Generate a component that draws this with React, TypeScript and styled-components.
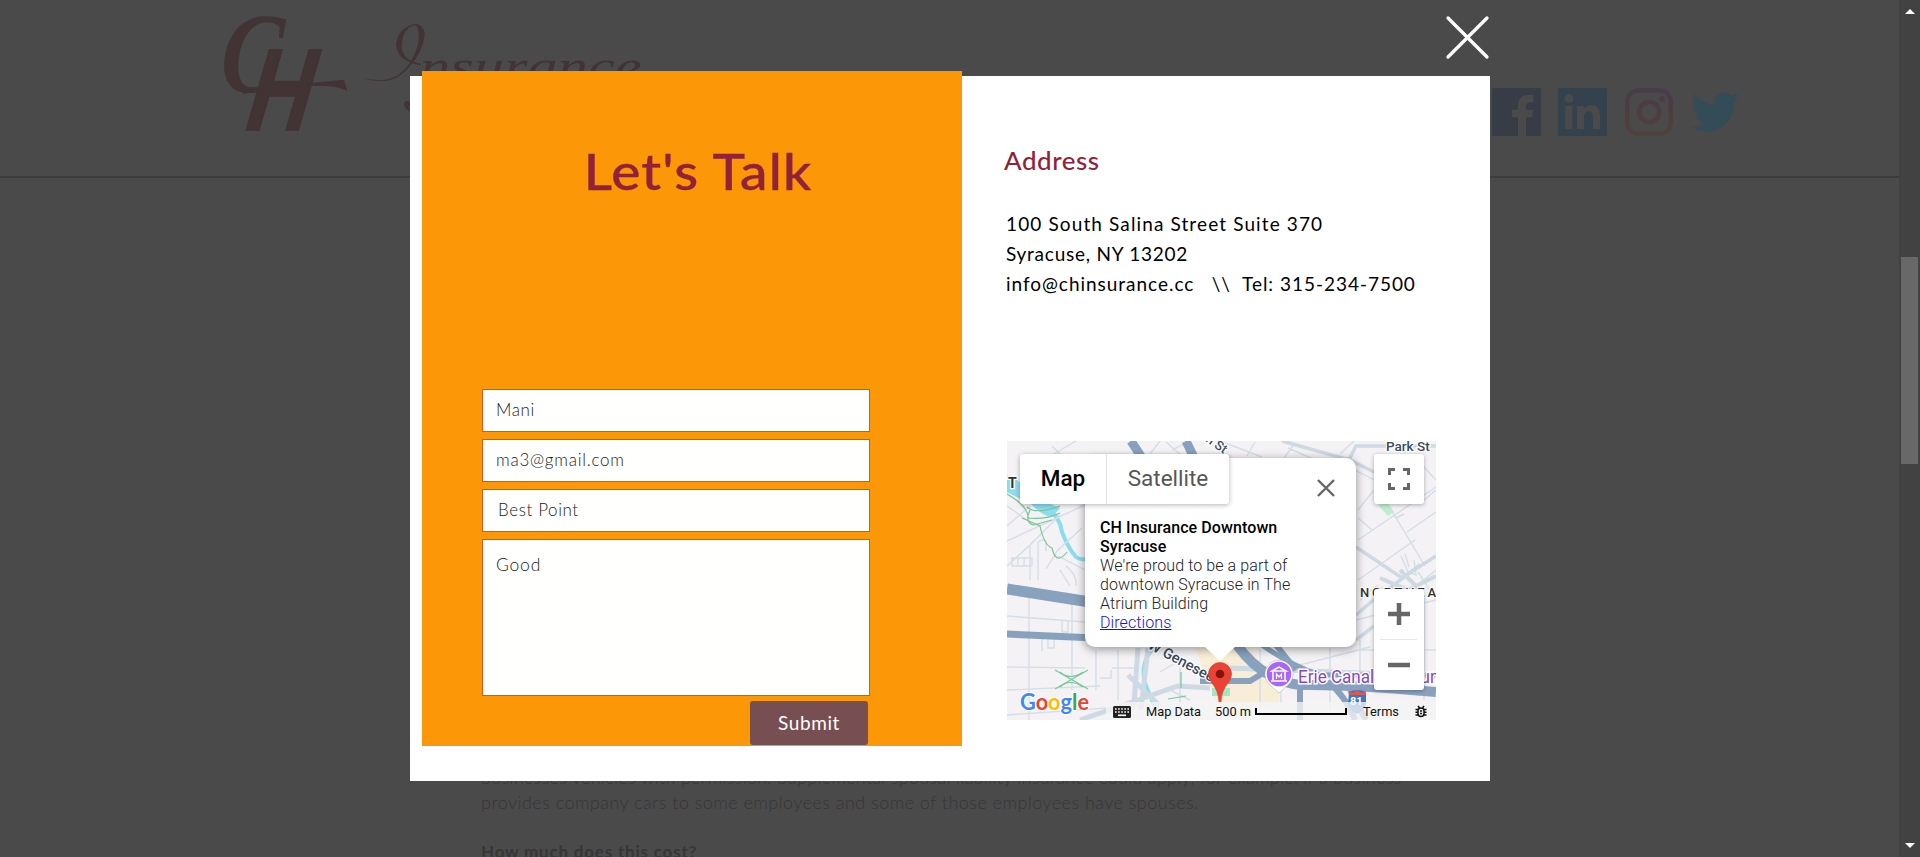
import React from "react";
import styled, { createGlobalStyle } from "styled-components";
import { FaTwitter } from "react-icons/fa";

const GlobalStyle = createGlobalStyle`
  * { box-sizing: border-box; }
  html, body { margin: 0; padding: 0; overflow: hidden; background: #4a4a4a; }
  body { font-family: Lato, "Open Sans", sans-serif; }
`;

const Page = styled.div`
  position: relative;
  display: flex;
  width: 1920px;
  height: 857px;
  overflow: hidden;
  background: #4a4a4a;
`;

const Site = styled.div`
  display: flex;
  flex-direction: column;
  justify-content: space-between;
  width: 1899px;
  height: 857px;
  overflow: hidden;
`;

const Header = styled.header`
  display: flex;
  justify-content: space-between;
  height: 178px;
  padding: 0 160px 0 200px;
  border-bottom: 2px solid #3c3c3c;
`;

const Social = styled.nav`
  display: flex;
  align-items: flex-start;
  gap: 17px;
  padding-top: 88px;
  svg { display: block; }
`;

const Article = styled.main`
  height: 92px;
  padding-left: 481px;
  color: #363636;
  font-weight: 300;
  font-size: 18px;
  line-height: 25px;
  white-space: nowrap;
`;

const Line = styled.p<{ $spacing: number }>`
  margin: 0;
  letter-spacing: ${(p) => p.$spacing}px;
`;

const Question = styled.h3`
  margin: 24px 0 0;
  font-size: 17px;
  line-height: 25px;
  font-weight: 700;
  letter-spacing: 0.8px;
`;

const Scrollbar = styled.div`
  display: flex;
  flex-direction: column;
  align-items: center;
  justify-content: space-between;
  width: 21px;
  padding: 9px 0;
  background: #424242;
`;

const Arrow = styled.span<{ $down?: boolean }>`
  border-left: 5px solid transparent;
  border-right: 5px solid transparent;
  ${(p) => (p.$down ? "border-top" : "border-bottom")}: 5px solid #fff;
`;

const Thumb = styled.span`
  width: 17px;
  height: 207px;
  margin-bottom: 136px;
  background: #686868;
`;

const Modal = styled.section`
  position: absolute;
  left: 410px;
  top: 76px;
  display: flex;
  width: 1080px;
  height: 705px;
  background: #fff;
`;

const CloseModal = styled.button`
  position: absolute;
  right: 0;
  top: -61px;
  width: 45px;
  height: 45px;
  padding: 0;
  border: 0;
  background: none;
  svg { display: block; }
`;

const TalkPanel = styled.div`
  display: flex;
  flex-direction: column;
  width: 540px;
  height: 675px;
  margin: -5px 0 0 12px;
  background: #fc9807;
`;

const Title = styled.h1`
  margin: 70px 0 0;
  padding-left: 11px;
  height: 248px;
  color: #91223a;
  font-size: 50px;
  line-height: 60px;
  font-weight: 500;
  letter-spacing: 1px;
  text-align: center;
  transform: scaleX(1.1);
  -webkit-text-stroke: 0.4px #91223a;
`;

const Form = styled.form`
  display: flex;
  flex-direction: column;
  gap: 7px;
  width: 388px;
  margin-left: 60px;
`;

const Field = styled.input<{ $indent?: number; $spacing?: number }>`
  height: 43px;
  padding: 0 13px 2px ${(p) => p.$indent ?? 13}px;
  border: 1px solid #d35a1c;
  border-radius: 0;
  outline: 0;
  background: #fffffe;
  color: #222;
  font: 300 17px/22px Lato, sans-serif;
  letter-spacing: ${(p) => p.$spacing ?? 0.6}px;
`;

const Message = styled.textarea`
  height: 157px;
  padding: 14px 13px;
  border: 1px solid #d35a1c;
  border-radius: 0;
  outline: 0;
  resize: none;
  background: #fffffe;
  color: #222;
  font: 300 17.5px/22px Lato, sans-serif;
  letter-spacing: 0.8px;
`;

const Submit = styled.button`
  align-self: flex-end;
  width: 118px;
  height: 44px;
  margin: -2px 2px 0 0;
  padding: 0;
  border: 0;
  border-radius: 3px;
  background: #774e52;
  color: #fff;
  font: 400 19px/24px Lato, sans-serif;
  letter-spacing: 0.6px;
`;

const Contact = styled.div`
  display: flex;
  flex-direction: column;
  padding: 69px 0 0 45px;
`;

const ContactTitle = styled.h2`
  margin: 0 0 32px -3px;
  color: #91223a;
  font-size: 24px;
  line-height: 32px;
  font-weight: 500;
  letter-spacing: 0.5px;
  transform: scaleX(1.08);
  transform-origin: left;
`;

const Address = styled.address`
  height: 156px;
  color: #000;
  font-size: 19px;
  line-height: 30px;
  font-style: normal;
  white-space: pre;
  p { margin-left: -1px; }
`;

const MapBox = styled.div`
  position: relative;
  width: 429px;
  height: 279px;
  margin-top: 76px;
  overflow: hidden;
  background: #f4f2f4;
  font-family: Roboto, sans-serif;
  & > svg { display: block; }
`;

const MapTypes = styled.div`
  position: absolute;
  left: 13px;
  top: 13px;
  display: flex;
  height: 50px;
  border-radius: 3px;
  background: #fff;
  box-shadow: 0 1px 5px rgba(0, 0, 0, 0.3);
`;

const MapType = styled.button<{ $active?: boolean }>`
  width: ${(p) => (p.$active ? 86 : 123)}px;
  padding: 0 0 2px;
  border: 0;
  border-left: ${(p) => (p.$active ? "0" : "1px solid #e2e2e2")};
  background: none;
  color: ${(p) => (p.$active ? "#000" : "#565656")};
  font: ${(p) => (p.$active ? 500 : 400)} 22.5px Roboto, sans-serif;
`;

const Control = styled.div<{ $top: number; $height: number }>`
  position: absolute;
  right: 12px;
  top: ${(p) => p.$top}px;
  width: 50px;
  height: ${(p) => p.$height}px;
  border-radius: 3px;
  background: #fff;
  box-shadow: 0 1px 4px rgba(0, 0, 0, 0.3);
  svg { display: block; }
`;

const InfoWindow = styled.div`
  position: absolute;
  left: 78px;
  top: 17px;
  width: 271px;
  height: 189px;
  padding: 60px 15px 0;
  border-radius: 10px;
  background: #fff;
  box-shadow: 0 2px 8px 1px rgba(0, 0, 0, 0.35);
  color: #222;
  font-size: 16px;
  line-height: 19.1px;
  font-weight: 300;
  letter-spacing: 0.09px;
  white-space: nowrap;
  &::after {
    content: "";
    position: absolute;
    left: 119px;
    top: 188px;
    border: 16px solid transparent;
    border-top: 15px solid #fff;
    border-bottom: 0;
  }
  strong { color: #000; font-weight: 500; }
  a { color: #1a0dee; text-decoration: underline; }
`;

const CloseInfo = styled.svg`
  position: absolute;
  right: 21px;
  top: 21px;
`;

const Legal = styled.div`
  position: absolute;
  right: 0;
  bottom: -1px;
  display: flex;
  align-items: center;
  width: 330px;
  height: 19px;
  padding: 0 9px 0 7px;
  background: rgba(245, 245, 245, 0.78);
  color: #111;
  font-size: 12.8px;
  line-height: 18px;
  white-space: nowrap;
`;

const LegalText = styled.span<{ $left: number; $width: number }>`
  width: ${(p) => p.$width}px;
  margin-left: ${(p) => p.$left}px;
`;

const ScaleBar = styled.span`
  width: 92px;
  height: 7px;
  margin-left: 5px;
  border: 2px solid #000;
  border-top: 0;
`;

const maroon = "#423335";

function Logo() {
  return (
    <svg width="460" height="176" viewBox="0 0 1380 528" fill={maroon}>
      <text transform="translate(57 276) skewX(-4) scale(0.79 0.98)" fontFamily="Liberation Serif" fontWeight="700" fontStyle="italic" fontSize="350">C</text>
      <text transform="translate(134 390) skewX(-8) scale(0.76 1)" fontFamily="Liberation Sans" fontWeight="700" fontStyle="italic" fontSize="349" stroke={maroon} strokeWidth="6">H</text>
      <path d="M130 270 L190 264 L300 252 L432 239 L442 272 Q405 255 330 258 L190 273 L130 281 Z" />
      <path d="M488 233 Q520 243 555 239 Q600 233 630 188 Q662 135 656 98 Q654 74 642 76 Q606 88 605 140 Q608 182 662 191 L660 195 Q592 184 588 135 Q592 84 645 71 Q674 74 674 106 Q668 160 625 204 Q588 244 550 243 Q510 243 488 233Z" />
      <text x="660" y="246" fontFamily="Liberation Serif" fontStyle="italic" fontSize="140" textLength="665" lengthAdjust="spacingAndGlyphs">nsurance</text>
      <path d="M630 305 Q612 298 612 315 Q616 328 630 335 L630 325 Q618 320 630 318Z" />
    </svg>
  );
}

function MapDrawing() {
  return (
    <svg width="429" height="279" viewBox="1007 441 429 279" fill="none">
      <path d="M1195 648 H1250 L1280 690 L1278 706 L1218 706 Z" fill="#f8eed8" />
      <path d="M1378 505 L1388 503 L1394 512 L1388 516 Z" fill="#bdeed0" />
      <path d="M1212 688 H1230 V696 H1212 Z" fill="#a6e5c0" />
      <path d="M1007 475 Q1022 480 1030 495 L1060 508 L1052 517 Q1042 516 1030 503 Q1018 498 1007 492Z" fill="#8bdcee" />
      <path d="M1046 508 Q1060 516 1062 532 Q1068 548 1076 557 Q1080 560 1085 559" stroke="#8bdcee" strokeWidth="4" />
      <path d="M1158 645 Q1140 658 1144 680 L1154 706" stroke="#8bdcee" strokeWidth="3.500" />
      <g stroke="#d3dee7" strokeWidth="1.4">
        <path d="M1007 541 L1085 505 M1007 526 L1030 506 M1007 566 L1030 545 L1060 515 M1030 545 V580 M1038 580 V543 Q1041 538 1046 541 V551 M1046 569 L1058 550 L1082 528 M1058 556 L1085 570 M1012 558 H1032 V566 H1012Z M1018 558 V566 M1024 558 V566 M1060 570 L1070 586 M1066 566 Q1077 574 1076 586 M1007 506 L1027 520" />
        <path d="M1029 597 V720 M1072 600 V690 M1007 616 L1085 622 M1007 667 L1085 668 M1007 690 L1100 686 M1042 636 V651 M1048 636 V648 H1054 V637 M1062 620 V632 H1068 V620 M1096 650 V690 M1112 668 H1135 M1111 670 V678 H1100 M1007 715 L1150 705 M1118 650 V700 M1160 672 L1180 660 M1170 690 L1190 700 M1180 660 V706" />
        <path d="M1052 455 L1076 441 M1066 460 L1052 446 M1150 454 L1160 441 M1166 442 L1182 456 M1172 450 L1190 441 M1220 441 L1262 457 M1255 442 L1247 456 M1295 443 L1284 458 M1288 448 L1320 462 M1340 454 L1354 441 M1355 470 L1378 482 M1358 510 L1374 490 M1358 540 L1436 487 M1390 508 L1425 566 M1407 532 L1436 512 M1396 518 L1404 514 M1358 580 L1415 540 M1412 454 L1436 480 M1424 500 L1436 490 M1401 556 L1408 572 L1416 575 L1414 560 M1405 554 L1409 567 M1358 518 L1372 530 M1356 620 L1436 600 M1356 650 H1436 M1360 640 V710 M1374 620 L1436 570 M1424 590 V700 M1260 650 V710 M1281 648 V706 M1330 648 V710 M1300 665 L1370 647 M1418 572 L1436 600 M1360 600 L1378 585" />
      </g>
      <g stroke="#cdd9e3" strokeWidth="3.500">
        <path d="M1282 441 L1349 460 L1356 446 H1436 M1346 458 L1374 472 M1356 547 L1402 578 L1436 556 M1374 600 L1420 565 M1356 615 L1385 590 M1356 640 L1374 626" />
        <path d="M1138 648 L1134 705 M1148 648 L1141 710 M1080 720 L1178 686 L1210 688 M1128 675 L1160 706 M1230 668 L1436 676" strokeWidth="5" />
        <path d="M1380 578 L1408 590 L1436 576 M1400 570 L1420 590" strokeWidth="4" />
      </g>
      <g stroke="#88a1be">
        <path d="M1131 441 L1150 470 M1186 441 L1200 470" strokeWidth="9" />
        <path d="M1007 589 L1090 602" strokeWidth="11" />
        <path d="M1007 634 L1095 638" strokeWidth="7" />
        <path d="M1237 645 Q1262 680 1300 685 Q1350 684 1436 692" strokeWidth="10" />
        <path d="M1262 645 Q1290 665 1320 675 H1436" strokeWidth="5" />
        <path d="M1200 681 H1250 L1268 670 M1276 645 L1296 670 M1300 686 V720 M1350 690 L1366 720" strokeWidth="6" />
        <path d="M1328 682 Q1345 695 1355 720" strokeWidth="6" />
      </g>
      <g stroke="#78c69a" strokeWidth="1.2">
        <path d="M1007 494 Q1030 507 1028 520 M1027 507 Q1035 515 1060 506 M1027 518 Q1046 520 1060 513 M1022 518 L1040 526 Q1044 545 1052 548 Q1056 566 1067 552 M1030 510 Q1024 523 1034 525 L1052 520 M1055 670 L1088 689 M1055 689 L1088 670 M1181 672 V688 M1168 699 L1186 696" />
        <path d="M1060 672 Q1070 681 1083 672 M1060 687 Q1070 678 1083 687" />
      </g>
      <g fontFamily="Roboto, sans-serif" stroke="#fff" strokeWidth="2.5" paintOrder="stroke" fill="#3a4a5e">
        <text x="1386" y="451" fontSize="13.5" fontWeight="500">Park St</text>
        <text transform="translate(1205 441) rotate(35)" fontSize="13" fontWeight="500">n St</text>
        <text x="1008" y="488" fontSize="14" fontWeight="700" fill="#333">T</text>
        <text x="1360" y="597" fontSize="13" fontWeight="500" textLength="76" fill="#333">NORTHEA</text>
        <text transform="translate(1147 648) rotate(28)" fontSize="14.500" fontWeight="500">W Genesee</text>
        <text x="1298" y="683" fontSize="18" fontWeight="400" fill="#8746c8" strokeWidth="3" textLength="147" lengthAdjust="spacingAndGlyphs">Erie Canal Museum</text>
      </g>
      <path d="M1349 692 Q1358 688 1366 692 V704 Q1365 710 1357 714 Q1349 710 1348 704Z" fill="#3b78c3" />
      <path d="M1349 691 L1353 693 L1357 690 L1362 693 L1366 691 V695 H1349Z" fill="#e5544f" />
      <text x="1350" y="705" fontFamily="Roboto" fontSize="11" fontWeight="700" fill="#fff">81</text>
      <path d="M1279 693 L1270 685 A14 14 0 1 1 1288 685 Z" fill="#fff" stroke="#aaa" strokeWidth="0.5" />
      <circle cx="1279" cy="674" r="12.3" fill="#a966f5" />
      <path d="M1272 671 L1279 667 L1286 671Z M1273 672 V680 M1285 672 V680 M1271 681 H1287" stroke="#fff" strokeWidth="1.5" />
      <path d="M1276.500 679 V674 L1279 677 L1281.500 674 V679" stroke="#fff" strokeWidth="1.3" />
      <text x="1020" y="710" fontFamily="Lato, sans-serif" fontSize="23" fontWeight="700" textLength="69" lengthAdjust="spacingAndGlyphs" stroke="#fff" strokeWidth="2" paintOrder="stroke">
        <tspan fill="#4285f4">G</tspan><tspan fill="#ea4335">o</tspan><tspan fill="#fbbc04">o</tspan><tspan fill="#4285f4">g</tspan><tspan fill="#34a853">l</tspan><tspan fill="#ea4335">e</tspan>
      </text>
    </svg>
  );
}

const MarkerIcon = styled.svg`
  position: absolute;
  left: 201px;
  top: 221px;
`;

function Marker() {
  return (
    <MarkerIcon width="24" height="42" viewBox="0 0 24 42">
      <path d="M12 0.500 A11.500 11.500 0 0 0 0.500 12 C0.500 21 10 23 11 39.500 Q12 41.500 13 39.500 C14 23 23.500 21 23.500 12 A11.500 11.500 0 0 0 12 0.500Z" fill="#ea4335" stroke="#cf3a2e" strokeWidth="0.6" />
      <circle cx="12" cy="12" r="4.300" fill="#811411" />
    </MarkerIcon>
  );
}

export default function App() {
  return (
    <Page>
      <GlobalStyle />
      <Site>
        <Header>
          <Logo />
          <Social>
            <svg width="49" height="48" viewBox="0 0 147 144">
              <rect width="147" height="144" rx="6" fill="#373c47" />
              <path d="M78 144 V88 H60 V65 H78 V52 Q79 22 107 21 H124 V43 H111 Q102 44 102 54 V65 H123 L120 88 H102 V144Z" fill="#4a4a4a" />
            </svg>
            <svg width="49" height="48" viewBox="0 0 147 144">
              <rect width="147" height="144" rx="6" fill="#33424c" />
              <g fill="#4a4a4a">
                <circle cx="33" cy="32" r="13" />
                <path d="M22 54 H43 V123 H22Z M57 54 H77 V63 Q84 52 99 52 Q126 53 126 84 V123 H105 V88 Q105 70 92 70 Q78 71 78 89 V123 H57Z" />
              </g>
            </svg>
            <svg width="50" height="48" viewBox="0 0 50 48" fill="none" stroke="url(#insta)">
              <defs>
                <linearGradient id="insta" gradientUnits="userSpaceOnUse" x1="25" y1="0" x2="25" y2="48">
                  <stop offset="0" stopColor="#483d4b" />
                  <stop offset="0.5" stopColor="#4e3c40" />
                  <stop offset="1" stopColor="#51423c" />
                </linearGradient>
              </defs>
              <rect x="3.200" y="2.200" width="43.600" height="43.600" rx="11.500" strokeWidth="4.400" />
              <circle cx="25.200" cy="24" r="10" strokeWidth="4.600" />
              <circle cx="38" cy="11" r="2.900" fill="url(#insta)" strokeWidth="0" />
            </svg>
            <FaTwitter size={48} color="#344b58" />
          </Social>
        </Header>
        <Article>
          <Line $spacing={0.3}>businesses vehicles with permission. Supplemental spousal liability insurance could apply, for example, if a business</Line>
          <Line $spacing={0.46}>provides company cars to some employees and some of those employees have spouses.</Line>
          <Question>How much does this cost?</Question>
        </Article>
      </Site>
      <Scrollbar>
        <Arrow />
        <Thumb />
        <Arrow $down />
      </Scrollbar>
      <Modal>
        <CloseModal aria-label="Close">
          <svg width="45" height="45" viewBox="0 0 45 45" stroke="#fff" strokeWidth="3.300" strokeLinecap="round">
            <path d="M3 3 L42 42 M42 3 L3 42" />
          </svg>
        </CloseModal>
        <TalkPanel>
          <Title>Let's Talk</Title>
          <Form>
            <Field defaultValue="Mani" />
            <Field defaultValue="ma3@gmail.com" $spacing={0.75} />
            <Field defaultValue="Best Point" $indent={15} />
            <Message defaultValue="Good" />
            <Submit type="button">Submit</Submit>
          </Form>
        </TalkPanel>
        <Contact>
          <ContactTitle>Address</ContactTitle>
          <Address>
            <Line $spacing={1.12}>100 South Salina Street Suite 370</Line>
            <Line $spacing={0.75}>Syracuse, NY 13202</Line>
            <Line $spacing={0.97}>{"info@chinsurance.cc   \\\\  Tel: 315-234-7500"}</Line>
          </Address>
          <MapBox>
            <MapDrawing />
            <InfoWindow>
              <strong>CH Insurance Downtown<br />Syracuse</strong><br />
              We're proud to be a part of<br />
              downtown Syracuse in The<br />
              Atrium Building<br />
              <a>Directions</a>
              <CloseInfo width="18" height="18" viewBox="0 0 18 18" stroke="#666" strokeWidth="2.400">
                <path d="M1 1 L17 17 M17 1 L1 17" />
              </CloseInfo>
            </InfoWindow>
            <Marker />
            <MapTypes>
              <MapType $active>Map</MapType>
              <MapType>Satellite</MapType>
            </MapTypes>
            <Control $top={13} $height={50}>
              <svg width="50" height="50" fill="none" stroke="#666" strokeWidth="3">
                <path d="M15.500 21 V15.500 H21 M29 15.500 H34.500 V21 M34.500 29 V34.500 H29 M21 34.500 H15.500 V29" />
              </svg>
            </Control>
            <Control $top={148} $height={101}>
              <svg width="50" height="101" fill="none" stroke="#666" strokeWidth="4.500">
                <path d="M14 25 H36 M25 14 V36 M14 76 H36" />
                <path d="M6 50.500 H43" stroke="#e6e6e6" strokeWidth="1" />
              </svg>
            </Control>
            <Legal>
              <svg width="18" height="12" viewBox="0 0 18 12">
                <rect width="18" height="12" rx="1.500" fill="#222" />
                <path d="M2 3 H16 M2 6 H16" stroke="#fff" strokeWidth="1.600" strokeDasharray="1.600 1.500" />
                <path d="M5 9.300 H13" stroke="#fff" strokeWidth="1.600" />
              </svg>
              <LegalText $left={15} $width={69}>Map Data</LegalText>
              <LegalText $left={0} $width={35}>500 m</LegalText>
              <ScaleBar />
              <LegalText $left={16} $width={52}>Terms</LegalText>
              <svg width="12" height="13" viewBox="0 0 12 13" fill="none" stroke="#111" strokeWidth="1.500">
                <rect x="3" y="3" width="6" height="8.500" rx="3" />
                <path d="M3 0.800 L4.500 3 M9 0.800 L7.500 3 M0.500 4.500 H3 M0.500 7.300 H3 M0.500 10 H3 M9 4.500 H11.500 M9 7.300 H11.500 M9 10 H11.500 M5 6 H7 M5 8.500 H7" />
              </svg>
            </Legal>
          </MapBox>
        </Contact>
      </Modal>
    </Page>
  );
}
